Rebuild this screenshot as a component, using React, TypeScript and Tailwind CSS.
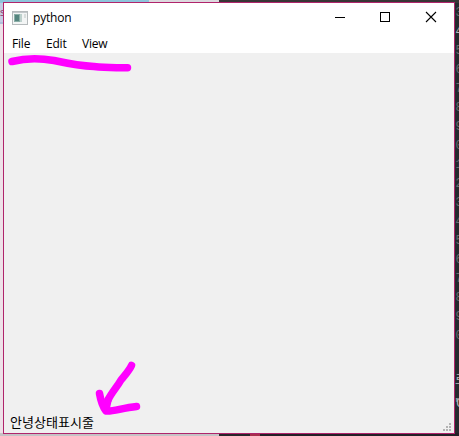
const lineNumbers = ['3', '4', '5', '6', '7', '8', '9', '0', '1', '2', '3', '4', '5', '6', '7', '8', '9', '0'];

function Desktop() {
  return (
    <div className="absolute inset-0 flex flex-col">
      <div className="flex h-[3px]">
        <div className="w-[149px] bg-[#8dc5dc]" />
        <div className="w-[70px] bg-[#dcd9de]" />
        <div className="flex-1 bg-[#383536]" />
      </div>
      <div className="flex flex-1 justify-between">
        <div className="flex w-[4px] flex-col overflow-hidden">
          <div className="h-[19px] bg-[#c5cce4] pt-[3px] text-[11px] leading-3 text-[#8d3769]">s</div>
          <div className="h-[2px] bg-[#aebfda]" />
          <div className="flex-1 bg-[#eee1e8]" />
        </div>
        <div className="w-[5px] overflow-hidden bg-[#252a2e] pt-[1px] font-['Liberation_Mono','Noto_Sans_CJK_KR',monospace] text-[12px] leading-[19px]">
          {lineNumbers.map((n, i) => (
            <div key={i} className={`h-[19px] pl-[1.5px] ${i === 1 ? 'text-[#b8bbbd]' : 'text-[#656d70]'}`}>{n}</div>
          ))}
          <div className="mt-[26px] h-[23px] pl-[1px] text-[#b8bbbd]">르</div>
          <div className="h-[19px] text-[#b8bbbd]"><span className="-ml-[2px] tracking-[-3px]">"C</span></div>
        </div>
      </div>
      <div className="flex h-[3px]">
        <div className="w-[219px] bg-[#c5c2c5]" />
        <div className="w-[31px] bg-[#29252b]" />
        <div className="w-[10px] bg-[#a52f4c]" />
        <div className="flex-1 bg-[#241f27]" />
      </div>
    </div>
  );
}

function AppIcon() {
  return (
    <svg className="ml-[8px] h-[14px] w-[16px]" viewBox="0 0 16 14" shapeRendering="crispEdges">
      <path fill="#b5babc" d="M0 0h16v14H0z" />
      <path fill="#f3f5f5" d="M1 2h14v11H1z" />
      <path fill="#c3c8cb" d="M1 1h14v1H1z" />
      <path fill="#8aaea7" d="M2 3h6v8H2z" />
      <path fill="#55857f" d="M3 4h4v6H3z" />
      <path fill="#bdd1cd" d="M8 3h2v8H8z" />
      <path fill="#d9dedd" d="M12 3h2v4h-2z" />
    </svg>
  );
}

function TitleBar() {
  return (
    <div className="flex h-[30px] items-center bg-white">
      <AppIcon />
      <span className="ml-[5px] w-10 text-[12px] leading-4 tracking-[-0.2px]">python</span>
      <svg className="ml-auto h-[30px] w-[138px]" viewBox="0 0 138 30" fill="none" stroke="#000">
        <path d="M19 14.5h10M64.5 9.5h9v9h-9z" shapeRendering="crispEdges" />
        <path d="M110 9l10 10m0-10l-10 10" strokeWidth="1.1" />
      </svg>
    </div>
  );
}

function MenuBar() {
  return (
    <div className="flex h-[20px] bg-white pt-[1px] pl-[8px] text-[12px] leading-[20px] tracking-[-0.2px]">
      <span className="w-[34px]">File</span>
      <span className="w-[36px]">Edit</span>
      <span>View</span>
    </div>
  );
}

function StatusBar() {
  return (
    <div className="flex h-[22px] justify-between">
      <span className="pt-[1px] pl-[6px] font-['Noto_Sans_CJK_KR',sans-serif] text-[13px] leading-[20px] tracking-[0.05px]">안녕상태표시줄</span>
      <svg className="mt-[12px] mr-[2px] h-[9px] w-[9px]" viewBox="0 0 9 9" fill="#b3b3b3" shapeRendering="crispEdges">
        <path d="M6 0h2v2H6zM3 3h2v2H3zM6 3h2v2H6zM0 6h2v2H0zM3 6h2v2H3zM6 6h2v2H6z" />
      </svg>
    </div>
  );
}

function Annotations() {
  return (
    <svg className="pointer-events-none absolute inset-0 h-full w-full" viewBox="0 0 459 436" fill="none" stroke="#ff00ff" strokeLinecap="round" strokeLinejoin="round" strokeWidth="7.5">
      <path d="M12 61.5C28 57.5 42 58.5 54 60.5C68 63.500 81 66 94 66.5C106 68 112 67.500 127.500 67.800" />
      <path d="M131.500 365.500C129 371 125 375 121 380C117 387 112 392 108 400" />
      <path d="M99.500 393.500C101 402 103 407 106 411C112 412 122 408 136.500 406.500" />
      <path d="M108 400L106 409" />
    </svg>
  );
}

export default function App() {
  return (
    <div className="relative h-[436px] w-[459px] overflow-hidden font-['Open_Sans','Noto_Sans',sans-serif] text-black">
      <Desktop />
      <div className="absolute top-[2px] left-[3px] flex h-[432px] w-[452px] flex-col border border-[#b0246b] bg-[#f0f0f0]">
        <TitleBar />
        <MenuBar />
        <div className="flex-1" />
        <StatusBar />
      </div>
      <Annotations />
    </div>
  );
}
